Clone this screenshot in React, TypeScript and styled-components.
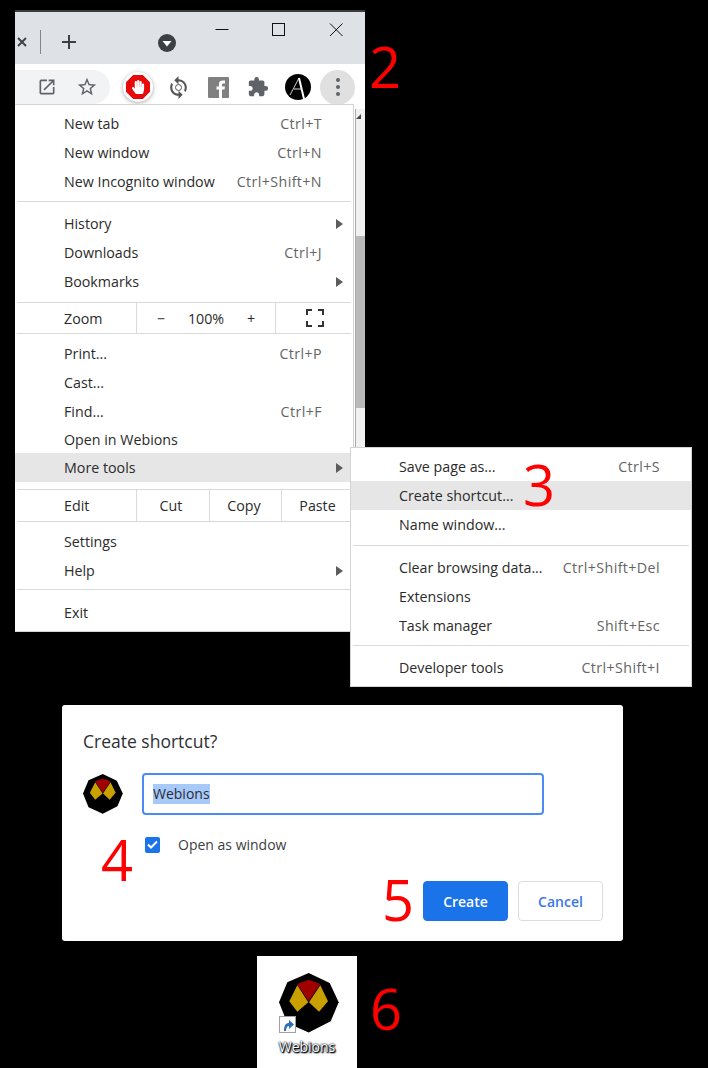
import React from "react";
import styled, { createGlobalStyle } from "styled-components";
import { MdExtension, MdOpenInNew, MdStarBorder, MdSync } from "react-icons/md";
import { FaHandPaper } from "react-icons/fa";

const GlobalStyle = createGlobalStyle`
  html, body {
    margin: 0;
    padding: 0;
    background: #000;
  }
  body {
    font-family: "Open Sans", "Noto Sans", sans-serif;
  }
`;

/* ---------- page ---------- */

const Page = styled.div`
  position: relative;
  width: 708px;
  height: 1068px;
  overflow: hidden;
  background: #000;
  padding-top: 10px;
  box-sizing: border-box;
`;

const TopRow = styled.div`
  display: flex;
  align-items: flex-start;
  margin-left: 15px;
`;

const Numeral = styled.span`
  display: block;
  color: #ff0000;
  font-family: "Open Sans", sans-serif;
  font-size: 56px;
  line-height: 58px;
  font-weight: 400;
`;

const NumeralTwo = styled(Numeral)`
  margin: 27px 0 0 4px;
`;

const NumeralOver = styled(Numeral)<{ $left: number; $top: number }>`
  position: absolute;
  left: ${({ $left }) => $left}px;
  top: ${({ $top }) => $top}px;
`;

/* ---------- browser window ---------- */

const BrowserWindow = styled.div`
  position: relative;
  width: 350px;
  height: 622px;
  border-top: 2px solid #3c3c3c;
  box-sizing: border-box;
  background: #fff;
`;

const TabStrip = styled.div`
  display: flex;
  height: 52px;
  background: #dee1e6;
  color: #3c4043;
`;

const TabTools = styled.div`
  display: flex;
  align-items: center;
  height: 60px;
  flex: 1;
`;

const TabClose = styled.svg`
  width: 10px;
  height: 10px;
  margin-left: 2px;
`;

const TabDivider = styled.div`
  width: 1px;
  height: 24px;
  background: #80868b;
  margin-left: 13px;
`;

const NewTab = styled.svg`
  width: 16px;
  height: 16px;
  margin-left: 20px;
`;

const TabSearch = styled.svg`
  width: 18px;
  height: 18px;
  margin-left: 81px;
  margin-top: 2px;
`;

const WindowControls = styled.div`
  display: flex;
  padding: 11px 22px 0 0;
  gap: 43px;
  height: 14px;
`;

const ControlIcon = styled.svg`
  width: 14px;
  height: 14px;
  display: block;
`;

const Toolbar = styled.div`
  display: flex;
  align-items: center;
  height: 40px;
  background: #fff;
`;

const Omnibox = styled.div`
  display: flex;
  align-items: center;
  gap: 19px;
  width: 95px;
  height: 34px;
  margin-top: 6px;
  padding-left: 22px;
  box-sizing: border-box;
  background: #f1f3f4;
  border-radius: 0 17px 17px 0;
  color: #5f6368;
`;

const ToolbarIcons = styled.div`
  display: flex;
  align-items: center;
  margin-top: 6px;
  margin-left: 13px;
  color: #5f6368;
`;

const ExtensionSlot = styled.div<{ $width: number }>`
  display: flex;
  align-items: center;
  justify-content: center;
  width: ${({ $width }) => $width}px;
  height: 34px;
`;

const StopBadge = styled.div`
  display: flex;
  align-items: center;
  justify-content: center;
  flex: none;
  width: 30px;
  height: 30px;
  border-radius: 50%;
  background: #fff;
  box-shadow: 0 1px 4px rgba(0, 0, 0, 0.35);
`;

const StopSign = styled.div`
  display: flex;
  align-items: center;
  justify-content: center;
  width: 24px;
  height: 24px;
  background: #e60a0a;
  color: #fff;
  clip-path: polygon(30% 0, 70% 0, 100% 30%, 100% 70%, 70% 100%, 30% 100%, 0 70%, 0 30%);
`;

const SyncWrap = styled.div`
  position: relative;
  display: flex;
  color: #555;
`;

const SyncDot = styled.span`
  position: absolute;
  left: 9px;
  top: 9px;
  width: 7px;
  height: 7px;
  box-sizing: border-box;
  border: 1.5px solid #555;
  border-radius: 50%;
`;

const MenuButton = styled.div`
  display: flex;
  flex-direction: column;
  align-items: center;
  justify-content: center;
  gap: 3px;
  width: 35px;
  height: 35px;
  margin-left: 7px;
  border-radius: 50%;
  background: #e0e0e0;
`;

const MenuDot = styled.span`
  width: 4px;
  height: 4px;
  border-radius: 50%;
  background: #5f6368;
`;

/* ---------- menus ---------- */

const PageArea = styled.div`
  display: flex;
  align-items: stretch;
`;

const MainMenu = styled.div`
  width: 339px;
  height: 528px;
  box-sizing: border-box;
  padding: 4px 0 5px;
  margin-right: 1px;
  background: #fff;
  border: 1px solid #d4d4d4;
  border-left: none;
`;

const MenuRow = styled.div<{ $h?: number; $active?: boolean; $inset: number; $pad: number }>`
  display: flex;
  align-items: center;
  justify-content: space-between;
  height: ${({ $h }) => $h ?? 29}px;
  padding: 0 ${({ $pad }) => $pad}px 0 ${({ $inset }) => $inset}px;
  background: ${({ $active }) => ($active ? "#e6e6e6" : "transparent")};
  font-size: 14.25px;
  color: #2b2b2b;
  white-space: nowrap;
`;

const Shortcut = styled.span`
  color: #646464;
  letter-spacing: 0.4px;
`;

const Arrow = styled.span`
  width: 0;
  height: 0;
  margin-right: -21px;
  border-left: 7px solid #5c5c5c;
  border-top: 5px solid transparent;
  border-bottom: 5px solid transparent;
`;

const Separator = styled.div<{ $before: number; $after: number; $left?: number }>`
  height: 1px;
  margin: ${({ $before }) => $before}px 2px ${({ $after }) => $after}px
    ${({ $left }) => $left ?? 2}px;
  background: #d9d9d9;
`;

const CellRow = styled.div<{ $h: number }>`
  display: flex;
  align-items: center;
  height: ${({ $h }) => $h}px;
  font-size: 14.25px;
  color: #2b2b2b;
`;

const CellLabel = styled.div`
  width: 121px;
  padding-left: 49px;
  box-sizing: border-box;
`;

const Cell = styled.div<{ $w: number; $nudge?: number }>`
  display: flex;
  align-items: center;
  justify-content: center;
  width: ${({ $w }) => $w}px;
  height: 100%;
  padding-right: ${({ $nudge }) => $nudge ?? 0}px;
  border-left: 1px solid #d9d9d9;
  box-sizing: border-box;
`;

const ZoomValue = styled.div`
  display: flex;
  align-items: center;
  justify-content: space-between;
  width: 100%;
  padding: 0 20px;
  box-sizing: border-box;
`;

const FullscreenIcon = styled.svg`
  width: 18px;
  height: 18px;
`;

const Scrollbar = styled.div`
  position: relative;
  width: 10px;
  margin-top: 5px;
  background: #f1f1f1;
  border-left: 1px solid #aaa;
`;

const ScrollArrow = styled.span`
  position: absolute;
  left: 0;
  top: 5px;
  width: 0;
  height: 0;
  border-left: 5px solid transparent;
  border-right: 0 solid transparent;
  border-bottom: 5px solid #444;
`;

const ScrollThumb = styled.div`
  width: 9px;
  height: 172px;
  margin-top: 127px;
  background: #b9b9b9;
`;

const SubMenu = styled.div`
  position: absolute;
  left: 335px;
  top: 435px;
  width: 342px;
  height: 240px;
  box-sizing: border-box;
  padding-top: 4px;
  background: #fff;
  border: 1px solid #d4d4d4;
`;

/* ---------- dialog ---------- */

const Dialog = styled.div`
  width: 561px;
  height: 236px;
  margin: 73px 0 0 62px;
  padding: 21px 20px 0 21px;
  box-sizing: border-box;
  background: #fff;
  border-radius: 3px;
`;

const DialogTitle = styled.div`
  font-size: 17.5px;
  line-height: 30px;
  color: #2f3033;
`;

const NameRow = styled.div`
  display: flex;
  align-items: center;
  gap: 19px;
  margin-top: 17px;
`;

const NameInput = styled.div`
  display: flex;
  align-items: center;
  width: 402px;
  height: 42px;
  padding-left: 9px;
  box-sizing: border-box;
  border: 2px solid #4c8bf5;
  border-radius: 4px;
  font-size: 14px;
  color: #2b2b3a;
`;

const Selected = styled.span`
  background: #a6c9f7;
  line-height: 20px;
`;

const CheckRow = styled.div`
  display: flex;
  align-items: center;
  gap: 18px;
  margin: 20px 0 0 62px;
  font-size: 14px;
  color: #3c4043;
`;

const Checkbox = styled.div`
  display: flex;
  align-items: center;
  justify-content: center;
  width: 15px;
  height: 16px;
  border-radius: 2px;
  background: #1a73e8;
`;

const DialogFooter = styled.div`
  display: flex;
  align-items: center;
  justify-content: flex-end;
  gap: 10px;
  margin-top: 16px;
`;

const Button = styled.div<{ $primary?: boolean }>`
  display: flex;
  align-items: center;
  justify-content: center;
  width: 85px;
  height: 40px;
  box-sizing: border-box;
  border-radius: 4px;
  font-size: 14px;
  font-weight: 600;
  color: ${({ $primary }) => ($primary ? "#fff" : "#3b78e7")};
  background: ${({ $primary }) => ($primary ? "#1a73e8" : "#fff")};
  border: 1px solid ${({ $primary }) => ($primary ? "#1a73e8" : "#dadce0")};
`;

const FooterNumeral = styled(Numeral)`
  margin: 0 -1px 4px 0;
`;

/* ---------- desktop tile ---------- */

const DesktopRow = styled.div`
  display: flex;
  align-items: flex-start;
  margin: 15px 0 0 257px;
`;

const DesktopTile = styled.div`
  display: flex;
  flex-direction: column;
  align-items: center;
  width: 100px;
  height: 112px;
  padding-top: 17px;
  box-sizing: border-box;
  background: #fff;
`;

const DesktopIcon = styled.div`
  position: relative;
  width: 60px;
  height: 60px;
  margin-left: 4px;
`;

const ShortcutBadge = styled.div`
  position: absolute;
  left: 0;
  bottom: 0;
  display: flex;
  align-items: center;
  justify-content: center;
  width: 17px;
  height: 17px;
  box-sizing: border-box;
  background: #fff;
  border: 1px solid #a0a0a0;
`;

const DesktopLabel = styled.div`
  margin-top: 4px;
  font-size: 14px;
  line-height: 20px;
  color: #fff;
  text-shadow: 0 0 2px #000, 1px 1px 2px #000, 0 0 1px #1a5fb4, 1px 1px 1px #000;
`;

const NumeralSix = styled(Numeral)`
  margin: 23px 0 0 13px;
`;

/* ---------- drawings ---------- */

const WebionsLogo: React.FC<{ size: number }> = ({ size }) => (
  <svg width={size} height={size} viewBox="0 0 60 60">
    <polygon
      points="29.7,0 50.7,10 59.7,29.3 51.7,48.3 29.7,59.5 8.3,50 0,29.3 8.3,9.3"
      fill="#000"
    />
    <polygon points="18,11 29.7,6.7 41.3,11 29.7,28.3" fill="#a00000" />
    <polygon points="18.3,12.3 29.3,29.3 18.3,38.7 10.3,28.3" fill="#c8a000" />
    <polygon points="41.3,12.3 49,28.3 40,38.7 30,29.3" fill="#c8a000" />
  </svg>
);

const AvatarLogo = () => (
  <svg width="26" height="26" viewBox="0 0 26 26">
    <circle cx="13" cy="13" r="13" fill="#000" />
    <path d="M5 21 L14 4" fill="none" stroke="#ccc" strokeWidth="1" />
    <path d="M14 4 L19 25" fill="none" stroke="#fff" strokeWidth="2" />
    <path d="M9 15 H17" stroke="#ddd" strokeWidth="1" />
  </svg>
);

const FacebookLogo = () => (
  <svg width="21" height="21" viewBox="0 0 21 21">
    <rect width="21" height="21" rx="1" fill="#808080" />
    <path
      d="M11 21 V12.5 H8.5 V9.5 H11 V7 C11 4.6 12.4 3.5 14.5 3.5 H17 V6.5 H15.3 C14.4 6.5 14 6.9 14 7.8 V9.5 H17 L16.5 12.5 H14 V21 Z"
      fill="#fff"
    />
  </svg>
);

type Item = { label: string; keys?: string; arrow?: boolean; h?: number; active?: boolean };

const renderRows = (items: Item[], inset: number, pad: number) =>
  items.map((item) => (
    <MenuRow key={item.label} $h={item.h} $active={item.active} $inset={inset} $pad={pad}>
      <span>{item.label}</span>
      {item.keys && <Shortcut>{item.keys}</Shortcut>}
      {item.arrow && <Arrow />}
    </MenuRow>
  ));

export default function App() {
  return (
    <Page>
      <GlobalStyle />
      <TopRow>
        <BrowserWindow>
          <TabStrip>
            <TabTools>
              <TabClose viewBox="0 0 10 10">
                <path d="M1 1 L9 9 M9 1 L1 9" stroke="#3c4043" strokeWidth="1.8" />
              </TabClose>
              <TabDivider />
              <NewTab viewBox="0 0 16 16">
                <path d="M8 1 V15 M1 8 H15" stroke="#3c4043" strokeWidth="2" />
              </NewTab>
              <TabSearch viewBox="0 0 18 18">
                <circle cx="9" cy="9" r="9" fill="#3c4043" />
                <path d="M4.5 7 H13.5 L9 12.5 Z" fill="#fff" />
              </TabSearch>
            </TabTools>
            <WindowControls>
              <ControlIcon viewBox="0 0 14 14">
                <path d="M0.5 6.5 H13.5" stroke="#111" strokeWidth="1" />
              </ControlIcon>
              <ControlIcon viewBox="0 0 14 14">
                <rect x="0.5" y="0.5" width="12" height="12" fill="none" stroke="#111" />
              </ControlIcon>
              <ControlIcon viewBox="0 0 14 14">
                <path d="M1 0.5 L13.5 13 M13.5 0.5 L1 13" stroke="#111" strokeWidth="1" />
              </ControlIcon>
            </WindowControls>
          </TabStrip>
          <Toolbar>
            <Omnibox>
              <MdOpenInNew size={20} />
              <MdStarBorder size={22} />
            </Omnibox>
            <ToolbarIcons>
              <ExtensionSlot $width={30}>
                <StopBadge>
                  <StopSign>
                    <FaHandPaper size={14} />
                  </StopSign>
                </StopBadge>
              </ExtensionSlot>
              <ExtensionSlot $width={50}>
                <SyncWrap>
                  <MdSync size={25} />
                  <SyncDot />
                </SyncWrap>
              </ExtensionSlot>
              <ExtensionSlot $width={30}>
                <FacebookLogo />
              </ExtensionSlot>
              <ExtensionSlot $width={50}>
                <MdExtension size={22} />
              </ExtensionSlot>
              <ExtensionSlot $width={30}>
                <AvatarLogo />
              </ExtensionSlot>
              <MenuButton>
                <MenuDot />
                <MenuDot />
                <MenuDot />
              </MenuButton>
            </ToolbarIcons>
          </Toolbar>
          <PageArea>
            <MainMenu>
              {renderRows(
                [
                  { label: "New tab", keys: "Ctrl+T" },
                  { label: "New window", keys: "Ctrl+N" },
                  { label: "New Incognito window", keys: "Ctrl+Shift+N" },
                ],
                49,
                31
              )}
              <Separator $before={5} $after={7} />
              {renderRows(
                [
                  { label: "History", arrow: true },
                  { label: "Downloads", keys: "Ctrl+J" },
                  { label: "Bookmarks", arrow: true },
                ],
                49,
                31
              )}
              <Separator $before={6} $after={0} />
              <CellRow $h={30}>
                <CellLabel>Zoom</CellLabel>
                <Cell $w={140}>
                  <ZoomValue>
                    <span>−</span>
                    <span>100%</span>
                    <span>+</span>
                  </ZoomValue>
                </Cell>
                <Cell $w={78}>
                  <FullscreenIcon viewBox="0 0 18 18">
                    <path
                      d="M1 6 V1 H6 M12 1 H17 V6 M17 12 V17 H12 M6 17 H1 V12"
                      fill="none"
                      stroke="#333"
                      strokeWidth="2"
                    />
                  </FullscreenIcon>
                </Cell>
              </CellRow>
              <Separator $before={0} $after={5} />
              {renderRows(
                [
                  { label: "Print...", keys: "Ctrl+P" },
                  { label: "Cast..." },
                  { label: "Find...", keys: "Ctrl+F" },
                  { label: "Open in Webions", h: 27 },
                  { label: "More tools", arrow: true, active: true },
                ],
                49,
                31
              )}
              <Separator $before={7} $after={0} />
              <CellRow $h={31}>
                <CellLabel>Edit</CellLabel>
                <Cell $w={73} $nudge={4}>Cut</Cell>
                <Cell $w={72} $nudge={3}>Copy</Cell>
                <Cell $w={72}>Paste</Cell>
              </CellRow>
              <Separator $before={0} $after={5} />
              {renderRows(
                [{ label: "Settings" }, { label: "Help", arrow: true }],
                49,
                31
              )}
              <Separator $before={4} $after={8} />
              {renderRows([{ label: "Exit" }], 49, 31)}
            </MainMenu>
            <Scrollbar>
              <ScrollArrow />
              <ScrollThumb />
            </Scrollbar>
          </PageArea>
          <SubMenu>
            {renderRows(
              [
                { label: "Save page as...", keys: "Ctrl+S" },
                { label: "Create shortcut...", active: true },
                { label: "Name window..." },
              ],
              48,
              31
            )}
            <Separator $before={6} $after={7} />
            {renderRows(
              [
                { label: "Clear browsing data...", keys: "Ctrl+Shift+Del" },
                { label: "Extensions" },
                { label: "Task manager", keys: "Shift+Esc" },
              ],
              48,
              31
            )}
            <Separator $before={5} $after={7} />
            {renderRows([{ label: "Developer tools", keys: "Ctrl+Shift+I" }], 48, 31)}
          </SubMenu>
        </BrowserWindow>
        <NumeralTwo>2</NumeralTwo>
      </TopRow>

      <NumeralOver $left={523} $top={455}>
        3
      </NumeralOver>

      <Dialog>
        <DialogTitle>Create shortcut?</DialogTitle>
        <NameRow>
          <WebionsLogo size={40} />
          <NameInput>
            <Selected>Webions</Selected>
          </NameInput>
        </NameRow>
        <CheckRow>
          <Checkbox>
            <svg width="11" height="9" viewBox="0 0 11 9">
              <path d="M1 4.5 L4 7.5 L10 1.5" fill="none" stroke="#fff" strokeWidth="2" />
            </svg>
          </Checkbox>
          <span>Open as window</span>
        </CheckRow>
        <DialogFooter>
          <FooterNumeral>5</FooterNumeral>
          <Button $primary>Create</Button>
          <Button>Cancel</Button>
        </DialogFooter>
      </Dialog>

      <NumeralOver $left={101} $top={830}>
        4
      </NumeralOver>

      <DesktopRow>
        <DesktopTile>
          <DesktopIcon>
            <WebionsLogo size={60} />
            <ShortcutBadge>
              <svg width="13" height="13" viewBox="0 0 13 13">
                <path d="M3 13 C3 7 5 5 8 5 V2 L13 6.5 L8 11 V8 C6 8 5 10 5 13 Z" fill="#2c6fb5" />
              </svg>
            </ShortcutBadge>
          </DesktopIcon>
          <DesktopLabel>Webions</DesktopLabel>
        </DesktopTile>
        <NumeralSix>6</NumeralSix>
      </DesktopRow>
    </Page>
  );
}
